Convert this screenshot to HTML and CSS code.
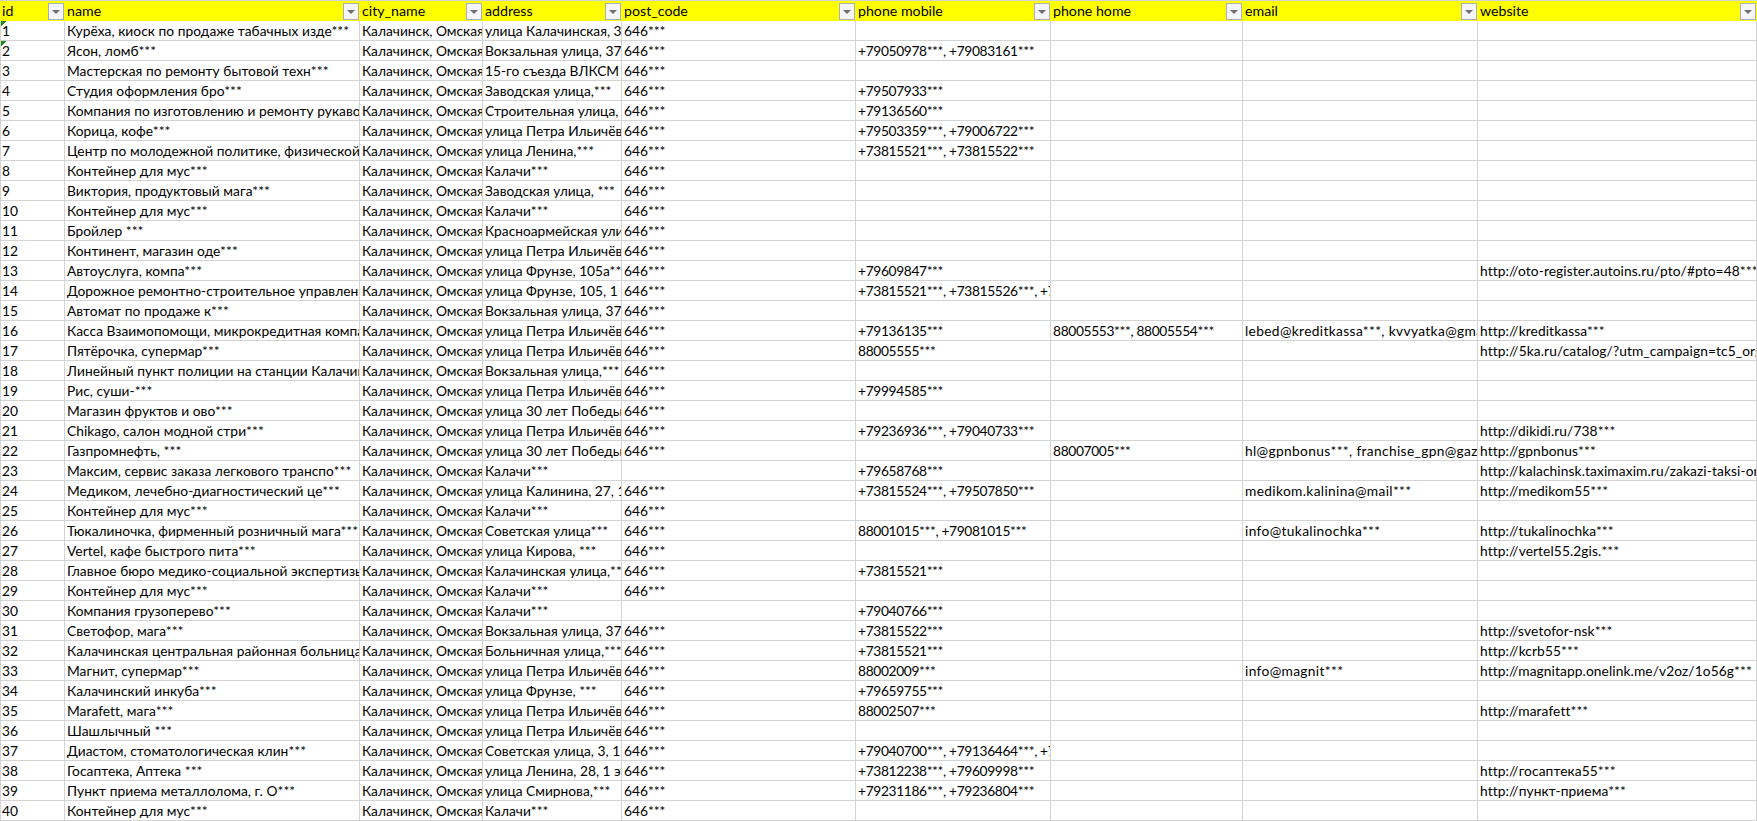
FILE: index.html
```html
<!DOCTYPE html>
<html lang="ru">
<head>
<meta charset="utf-8">
<title>Организации</title>
<link rel="stylesheet" href="styles.css">
</head>
<body>
<svg class="defs" width="0" height="0" aria-hidden="true"><symbol id="flt" viewBox="0 0 16 17"><rect x="0.5" y="0.5" width="15" height="16" fill="#f4f6f9" stroke="#a8b0c0"/><path d="M4 7h8l-4 4z" fill="#6f6f6f"/></symbol></svg>
<table class="sheet">
<colgroup><col class="c1"><col class="c2"><col class="c3"><col class="c4"><col class="c5"><col class="c6"><col class="c7"><col class="c8"><col class="c9"></colgroup>
<thead><tr>
<th><div class="hd"><span>id</span><svg class="fb"><use href="#flt"/></svg></div></th>
<th><div class="hd"><span>name</span><svg class="fb"><use href="#flt"/></svg></div></th>
<th><div class="hd"><span>city_name</span><svg class="fb"><use href="#flt"/></svg></div></th>
<th><div class="hd"><span>address</span><svg class="fb"><use href="#flt"/></svg></div></th>
<th><div class="hd"><span>post_code</span><svg class="fb"><use href="#flt"/></svg></div></th>
<th><div class="hd"><span>phone mobile</span><svg class="fb"><use href="#flt"/></svg></div></th>
<th><div class="hd"><span>phone home</span><svg class="fb"><use href="#flt"/></svg></div></th>
<th><div class="hd"><span>email</span><svg class="fb"><use href="#flt"/></svg></div></th>
<th><div class="hd"><span>website</span><svg class="fb"><use href="#flt"/></svg></div></th>
</tr></thead>
<tbody>
<tr><td class="flag">1</td><td>Курёха, киоск по продаже табачных изде***</td><td>Калачинск, Омская область</td><td>улица Калачинская, 3***</td><td>646***</td><td></td><td></td><td></td><td></td></tr>
<tr><td class="flag">2</td><td>Ясон, ломб***</td><td>Калачинск, Омская область</td><td>Вокзальная улица, 37, ***</td><td>646***</td><td>+79050978***, +79083161***</td><td></td><td></td><td></td></tr>
<tr><td>3</td><td>Мастерская по ремонту бытовой техн***</td><td>Калачинск, Омская область</td><td>15-го съезда ВЛКСМ улица***</td><td>646***</td><td></td><td></td><td></td><td></td></tr>
<tr><td>4</td><td>Студия оформления бро***</td><td>Калачинск, Омская область</td><td>Заводская улица,***</td><td>646***</td><td>+79507933***</td><td></td><td></td><td></td></tr>
<tr><td>5</td><td>Компания по изготовлению и ремонту рукавов***</td><td>Калачинск, Омская область</td><td>Строительная улица, ***</td><td>646***</td><td>+79136560***</td><td></td><td></td><td></td></tr>
<tr><td>6</td><td>Корица, кофе***</td><td>Калачинск, Омская область</td><td>улица Петра Ильичёва, ***</td><td>646***</td><td>+79503359***, +79006722***</td><td></td><td></td><td></td></tr>
<tr><td>7</td><td>Центр по молодежной политике, физической культуре***</td><td>Калачинск, Омская область</td><td>улица Ленина,***</td><td>646***</td><td>+73815521***, +73815522***</td><td></td><td></td><td></td></tr>
<tr><td>8</td><td>Контейнер для мус***</td><td>Калачинск, Омская область</td><td>Калачи***</td><td>646***</td><td></td><td></td><td></td><td></td></tr>
<tr><td>9</td><td>Виктория, продуктовый мага***</td><td>Калачинск, Омская область</td><td>Заводская улица, ***</td><td>646***</td><td></td><td></td><td></td><td></td></tr>
<tr><td>10</td><td>Контейнер для мус***</td><td>Калачинск, Омская область</td><td>Калачи***</td><td>646***</td><td></td><td></td><td></td><td></td></tr>
<tr><td>11</td><td>Бройлер ***</td><td>Калачинск, Омская область</td><td>Красноармейская улица***</td><td>646***</td><td></td><td></td><td></td><td></td></tr>
<tr><td>12</td><td>Континент, магазин оде***</td><td>Калачинск, Омская область</td><td>улица Петра Ильичёва, ***</td><td>646***</td><td></td><td></td><td></td><td></td></tr>
<tr><td>13</td><td>Автоуслуга, компа***</td><td>Калачинск, Омская область</td><td>улица Фрунзе, 105а***</td><td>646***</td><td>+79609847***</td><td></td><td></td><td>http://oto-register.autoins.ru/pto/#pto=48***</td></tr>
<tr><td>14</td><td>Дорожное ремонтно-строительное управление***</td><td>Калачинск, Омская область</td><td>улица Фрунзе, 105, 1 этаж***</td><td>646***</td><td>+73815521***, +73815526***, +73815527***</td><td></td><td></td><td></td></tr>
<tr><td>15</td><td>Автомат по продаже к***</td><td>Калачинск, Омская область</td><td>Вокзальная улица, 37, ***</td><td>646***</td><td></td><td></td><td></td><td></td></tr>
<tr><td>16</td><td>Касса Взаимопомощи, микрокредитная компания***</td><td>Калачинск, Омская область</td><td>улица Петра Ильичёва, ***</td><td>646***</td><td>+79136135***</td><td>88005553***, 88005554***</td><td>lebed@kreditkassa***, kvvyatka@gmail***</td><td>http://kreditkassa***</td></tr>
<tr><td>17</td><td>Пятёрочка, супермар***</td><td>Калачинск, Омская область</td><td>улица Петра Ильичёва, ***</td><td>646***</td><td>88005555***</td><td></td><td></td><td>http://5ka.ru/catalog/?utm_campaign=tc5_organic***</td></tr>
<tr><td>18</td><td>Линейный пункт полиции на станции Калачинская***</td><td>Калачинск, Омская область</td><td>Вокзальная улица,***</td><td>646***</td><td></td><td></td><td></td><td></td></tr>
<tr><td>19</td><td>Рис, суши-***</td><td>Калачинск, Омская область</td><td>улица Петра Ильичёва, ***</td><td>646***</td><td>+79994585***</td><td></td><td></td><td></td></tr>
<tr><td>20</td><td>Магазин фруктов и ово***</td><td>Калачинск, Омская область</td><td>улица 30 лет Победы***</td><td>646***</td><td></td><td></td><td></td><td></td></tr>
<tr><td>21</td><td>Chikago, салон модной стри***</td><td>Калачинск, Омская область</td><td>улица Петра Ильичёва, ***</td><td>646***</td><td>+79236936***, +79040733***</td><td></td><td></td><td>http://dikidi.ru/738***</td></tr>
<tr><td>22</td><td>Газпромнефть, ***</td><td>Калачинск, Омская область</td><td>улица 30 лет Победы, ***</td><td>646***</td><td></td><td>88007005***</td><td>hl@gpnbonus***, franchise_gpn@gazprom***</td><td>http://gpnbonus***</td></tr>
<tr><td>23</td><td>Максим, сервис заказа легкового транспо***</td><td>Калачинск, Омская область</td><td>Калачи***</td><td></td><td>+79658768***</td><td></td><td></td><td>http://kalachinsk.taximaxim.ru/zakazi-taksi-online***</td></tr>
<tr><td>24</td><td>Медиком, лечебно-диагностический це***</td><td>Калачинск, Омская область</td><td>улица Калинина, 27, 1 этаж***</td><td>646***</td><td>+73815524***, +79507850***</td><td></td><td>medikom.kalinina@mail***</td><td>http://medikom55***</td></tr>
<tr><td>25</td><td>Контейнер для мус***</td><td>Калачинск, Омская область</td><td>Калачи***</td><td>646***</td><td></td><td></td><td></td><td></td></tr>
<tr><td>26</td><td>Тюкалиночка, фирменный розничный мага***</td><td>Калачинск, Омская область</td><td>Советская улица***</td><td>646***</td><td>88001015***, +79081015***</td><td></td><td>info@tukalinochka***</td><td>http://tukalinochka***</td></tr>
<tr><td>27</td><td>Vertel, кафе быстрого пита***</td><td>Калачинск, Омская область</td><td>улица Кирова, ***</td><td>646***</td><td></td><td></td><td></td><td>http://vertel55.2gis.***</td></tr>
<tr><td>28</td><td>Главное бюро медико-социальной экспертизы***</td><td>Калачинск, Омская область</td><td>Калачинская улица,***</td><td>646***</td><td>+73815521***</td><td></td><td></td><td></td></tr>
<tr><td>29</td><td>Контейнер для мус***</td><td>Калачинск, Омская область</td><td>Калачи***</td><td>646***</td><td></td><td></td><td></td><td></td></tr>
<tr><td>30</td><td>Компания грузоперево***</td><td>Калачинск, Омская область</td><td>Калачи***</td><td></td><td>+79040766***</td><td></td><td></td><td></td></tr>
<tr><td>31</td><td>Светофор, мага***</td><td>Калачинск, Омская область</td><td>Вокзальная улица, 37, ***</td><td>646***</td><td>+73815522***</td><td></td><td></td><td>http://svetofor-nsk***</td></tr>
<tr><td>32</td><td>Калачинская центральная районная больница***</td><td>Калачинск, Омская область</td><td>Больничная улица,***</td><td>646***</td><td>+73815521***</td><td></td><td></td><td>http://kcrb55***</td></tr>
<tr><td>33</td><td>Магнит, супермар***</td><td>Калачинск, Омская область</td><td>улица Петра Ильичёва, ***</td><td>646***</td><td>88002009***</td><td></td><td>info@magnit***</td><td>http://magnitapp.onelink.me/v2oz/1o56g***</td></tr>
<tr><td>34</td><td>Калачинский инкуба***</td><td>Калачинск, Омская область</td><td>улица Фрунзе, ***</td><td>646***</td><td>+79659755***</td><td></td><td></td><td></td></tr>
<tr><td>35</td><td>Marafett, мага***</td><td>Калачинск, Омская область</td><td>улица Петра Ильичёва, ***</td><td>646***</td><td>88002507***</td><td></td><td></td><td>http://marafett***</td></tr>
<tr><td>36</td><td>Шашлычный ***</td><td>Калачинск, Омская область</td><td>улица Петра Ильичёва, ***</td><td>646***</td><td></td><td></td><td></td><td></td></tr>
<tr><td>37</td><td>Диастом, стоматологическая клин***</td><td>Калачинск, Омская область</td><td>Советская улица, 3, 1 этаж***</td><td>646***</td><td>+79040700***, +79136464***, +79136465***</td><td></td><td></td><td></td></tr>
<tr><td>38</td><td>Госаптека, Аптека ***</td><td>Калачинск, Омская область</td><td>улица Ленина, 28, 1 этаж***</td><td>646***</td><td>+73812238***, +79609998***</td><td></td><td></td><td>http://госаптека55***</td></tr>
<tr><td>39</td><td>Пункт приема металлолома, г. О***</td><td>Калачинск, Омская область</td><td>улица Смирнова,***</td><td>646***</td><td>+79231186***, +79236804***</td><td></td><td></td><td>http://пункт-приема***</td></tr>
<tr><td>40</td><td>Контейнер для мус***</td><td>Калачинск, Омская область</td><td>Калачи***</td><td>646***</td><td></td><td></td><td></td><td></td></tr>
</tbody>
</table>
</body>
</html>
```
FILE: styles.css
```css
html, body {
  margin: 0;
  padding: 0;
  background: #fff;
  overflow: hidden;
}
.defs { display: block; height: 0; }
.sheet {
  table-layout: fixed;
  border-collapse: separate;
  border-spacing: 0;
  width: 1757px;
  font-family: Lato, "Open Sans", sans-serif;
  font-size: 13.75px;
  color: #000;
}
.c1 { width: 65px; }
.c2 { width: 295px; }
.c3 { width: 123px; }
.c4 { width: 139px; }
.c5 { width: 234px; }
.c6 { width: 195px; }
.c7 { width: 192px; }
.c8 { width: 235px; }
.c9 { width: 279px; }
th {
  height: 21px;
  box-sizing: border-box;
  padding: 0;
  background: #ffff00;
  border-top: 1px solid #d4d4d4;
  font-weight: 400;
  font-size: 14.2px;
  text-align: left;
}
.hd {
  display: flex;
  align-items: center;
  justify-content: space-between;
  padding: 0 1px 0 2px;
  height: 20px;
  line-height: 20px;
}
.fb {
  flex: none;
  width: 16px;
  height: 17px;
}
td {
  height: 20px;
  box-sizing: border-box;
  padding: 0 0 0 2px;
  border-right: 1px solid #d4d4d4;
  border-bottom: 1px solid #d4d4d4;
  white-space: nowrap;
  overflow: hidden;
  vertical-align: bottom;
  line-height: 18px;
}
td:first-child {
  border-left: 1px solid #d4d4d4;
  padding-left: 1px;
}
td:nth-child(2) {
  letter-spacing: 0.05px;
}
td:nth-child(6),
td:nth-child(7) {
  letter-spacing: -0.35px;
}
td:nth-child(8) {
  letter-spacing: 0.35px;
}
td:nth-child(9) {
  letter-spacing: 0.1px;
}
.flag {
  background: linear-gradient(135deg, #1f8a1f 50%, transparent 50%) 0 0 / 6px 6px no-repeat;
}
```
